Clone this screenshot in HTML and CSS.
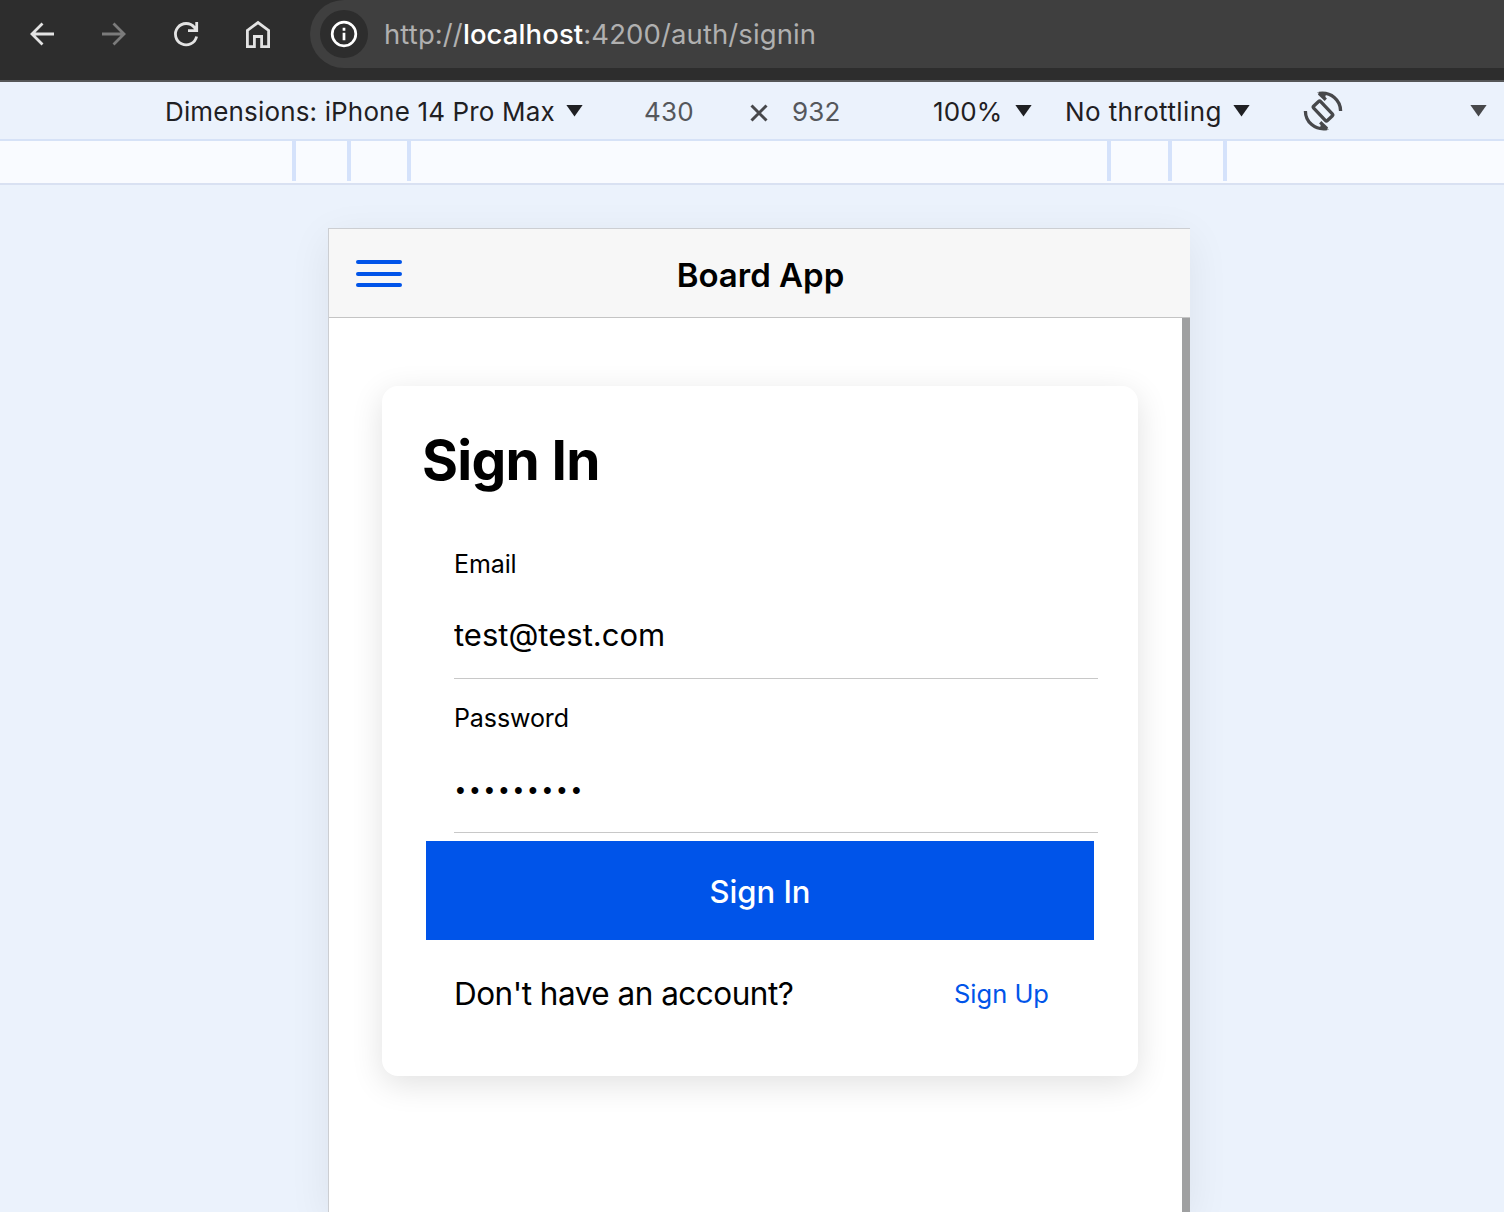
FILE: index.html
```html
<!DOCTYPE html>
<html lang="en">
<head>
    <meta charset="UTF-8">
    <meta name="viewport" content="width=device-width, initial-scale=1.0">
    <title>Board App</title>
    <link rel="stylesheet" href="styles.css">
</head>
<body>
    <div class="browser-bar">
        <svg class="nav-icon" viewBox="0 0 32 32"><path d="M28 16H6M16.5 5.5L6 16l10.5 10.5"/></svg>
        <svg class="nav-icon disabled" viewBox="0 0 32 32"><path d="M4 16h22M15.5 5.5L26 16 15.5 26.5"/></svg>
        <svg class="nav-icon" viewBox="0 0 32 32"><path d="M26.6 18.5A10.7 10.7 0 1 1 24.5 9.5L27 12.2M26.7 4v8.6H18"/></svg>
        <svg class="nav-icon" viewBox="0 0 32 32"><path d="M5.4 28.6V12.4L16 4.6l10.6 7.8v16.2h-7V18.5h-7.2v10.1z"/></svg>
        <div class="address">
            <div class="info">
                <svg viewBox="0 0 28 28"><circle cx="14" cy="14" r="11.8"/><path d="M14 12.8v7.4M14 7.8v3"/></svg>
            </div>
            <div class="url">http://<span>localhost</span>:4200/auth/signin</div>
        </div>
    </div>

    <div class="device-bar">
        <div class="select device">Dimensions: iPhone 14 Pro Max</div>
        <i class="arrow"></i>
        <div class="size width">430</div>
        <svg class="times" viewBox="0 0 18 18"><path d="M1.5 1.5l15 15M16.5 1.5l-15 15"/></svg>
        <div class="size height">932</div>
        <div class="select zoom">100%</div>
        <i class="arrow"></i>
        <div class="select throttling">No throttling</div>
        <i class="arrow"></i>
        <svg class="rotate" viewBox="0 0 40 40">
            <rect x="10" y="15.2" width="20" height="9.6" rx="1.5" transform="rotate(47 20 20)"/>
            <path d="M16 2.4C28 .6 37.6 9 37.6 20M16 2.4l6.8 6.4"/>
            <path d="M24 37.6C12 39.4 2.4 31 2.4 20M24 37.6l-6.8-6.4"/>
            <path class="tip" d="M14 1.5l9.5 0-1.5 5.5zM26 38.5l-9.5 0 1.5-5.5z"/>
        </svg>
        <i class="arrow more"></i>
    </div>

    <div class="ruler">
        <span class="r1"></span>
        <span class="r2"></span>
        <span class="r3"></span>
        <span class="r4"></span>
        <span class="r5"></span>
        <span class="r2"></span>
    </div>

    <div class="stage">
        <div class="phone">
            <div class="header">
                <div class="menu"><span></span><span></span><span></span></div>
                <div class="title">Board App</div>
            </div>
            <div class="content">
                <form class="card">
                    <h1>Sign In</h1>
                    <div class="item">
                        <label for="email">Email</label>
                        <input type="email" id="email" value="test@test.com">
                    </div>
                    <div class="item">
                        <label for="password">Password</label>
                        <input type="password" id="password" value="password1">
                    </div>
                    <button type="button">Sign In</button>
                    <div class="signup">
                        <span>Don't have an account?</span>
                        <a href="#">Sign Up</a>
                    </div>
                </form>
            </div>
        </div>
    </div>
</body>
</html>
```
FILE: styles.css
```css
* {
    box-sizing: border-box;
}
body {
    margin: 0;
    height: 1212px;
    display: flex;
    flex-direction: column;
    overflow: hidden;
    background: #ebf2fc;
    color: #000;
    font-family: Inter, "Liberation Sans", sans-serif;
}
svg {
    display: block;
    fill: none;
    stroke: currentColor;
}

/* browser toolbar */
.browser-bar {
    flex: none;
    display: flex;
    height: 82px;
    padding-left: 26px;
    background: #2d2d2d;
    border-bottom: 2px solid #555657;
    color: #e3e3e3;
}
.nav-icon {
    width: 32px;
    height: 32px;
    margin: 18px 40px 0 0;
    stroke-width: 2.8;
}
.nav-icon.disabled {
    color: #7b7b7b;
}
.address {
    flex: 1;
    display: flex;
    align-items: center;
    height: 68px;
    margin-left: -4px;
    padding-left: 10px;
    background: #3f3f3f;
    border-radius: 34px 0 0 34px;
}
.info {
    display: flex;
    align-items: center;
    justify-content: center;
    width: 48px;
    height: 48px;
    border-radius: 50%;
    background: #2d2d2d;
    color: #fff;
}
.info svg {
    width: 28px;
    height: 28px;
    stroke-width: 2.7;
}
.url {
    margin-left: 16px;
    font-size: 27.5px;
    letter-spacing: 0.1px;
    color: #b0b0b0;
}
.url span {
    font-weight: 500;
    color: #fff;
}

/* device toolbar */
.device-bar {
    flex: none;
    display: flex;
    align-items: center;
    height: 59px;
    padding-left: 165px;
    border-bottom: 2px solid #d6e2f7;
    font-size: 26px;
    line-height: 32px;
    letter-spacing: 0.15px;
    white-space: nowrap;
    color: #1f2023;
}
.arrow {
    width: 17px;
    height: 12px;
    background: currentColor;
    clip-path: polygon(0 0, 100% 0, 50% 100%);
}
.select, .size {
    padding-top: 2px;
}
.device {
    width: 401px;
}
.size {
    color: #55575b;
}
.width {
    width: 106px;
    margin-left: 61px;
}
.times {
    width: 18px;
    height: 18px;
    margin-top: 4px;
    stroke-width: 3;
    color: #47484b;
}
.height {
    width: 141px;
    margin-left: 24px;
}
.zoom {
    width: 82px;
}
.throttling {
    width: 168px;
    margin-left: 33px;
    letter-spacing: 0.4px;
}
.rotate {
    width: 40px;
    height: 40px;
    margin-left: 53px;
    stroke-width: 3.3;
    color: #47484b;
}
.rotate .tip {
    fill: currentColor;
    stroke: none;
}
.more {
    margin-left: 127px;
    color: #47484b;
}

.ruler {
    flex: none;
    display: flex;
    height: 44px;
    background: #f9fbff;
    border-bottom: 2px solid #d9e1f2;
}
.ruler span {
    height: 40px;
    border-right: 4px solid #d5e2fb;
}
.r1 {
    width: 296px;
}
.r2 {
    width: 55px;
}
.r3 {
    width: 60px;
}
.r4 {
    width: 700px;
}
.r5 {
    width: 61px;
}

/* emulated phone */
.stage {
    flex: 1;
    display: flex;
    padding: 43px 0 0 328px;
}
.phone {
    display: flex;
    flex-direction: column;
    width: 862px;
    background: #fff;
    border: 1px solid #ccced2;
    border-width: 1px 0 0 1px;
    box-shadow: 0 10px 40px rgba(0, 0, 0, 0.07);
}
.header {
    flex: none;
    display: flex;
    align-items: center;
    height: 89px;
    padding-left: 27px;
    background: #f7f7f7;
    border-bottom: 1px solid #c4c4c4;
}
.menu {
    display: flex;
    flex-direction: column;
    gap: 7.5px;
    width: 46px;
    margin-top: 1px;
}
.menu span {
    height: 4px;
    border-radius: 2px;
    background: #0054e9;
}
.title {
    flex: 1;
    margin: 3px 71px 0 0;
    text-align: center;
    font-size: 33px;
    font-weight: 600;
}
.content {
    flex: 1;
    padding: 68px 44px 0 53px;
    border-right: 8px solid #9fa0a1;
}

/* sign in form */
.card {
    height: 690px;
    padding: 39px 40px;
    border-radius: 16px;
    background: #fff;
    box-shadow: 0 8px 32px rgba(0, 0, 0, 0.12);
}
.card h1 {
    margin: 0 0 30px;
    font-size: 55px;
    line-height: 70px;
    font-weight: 700;
    letter-spacing: -0.7px;
}
.item {
    display: flex;
    flex-direction: column;
    gap: 35px;
    height: 154px;
    margin-left: 32px;
    padding-top: 24px;
    border-bottom: 1px solid #c8c8c8;
}
.item label {
    font-size: 25px;
    line-height: 30px;
    letter-spacing: -0.1px;
}
.item input {
    width: 100%;
    height: 40px;
    padding: 0;
    border: none;
    outline: none;
    background: none;
    font-family: inherit;
    font-size: 31px;
    color: #000;
}
.item input[type="password"] {
    padding: 4px 0 0 2px;
    font-family: "Liberation Sans", sans-serif;
    font-size: 25px;
    letter-spacing: 5.75px;
}
.card button {
    display: block;
    width: calc(100% - 8px);
    height: 99px;
    margin: 8px 4px;
    padding: 2px 0 0;
    border: none;
    background: #0054e9;
    color: #fff;
    font-family: inherit;
    font-size: 31px;
    font-weight: 500;
    cursor: pointer;
}
.signup {
    display: flex;
    align-items: center;
    justify-content: space-between;
    height: 90px;
    padding: 0 49px 0 32px;
    font-size: 31.5px;
    letter-spacing: -0.5px;
}
.signup a {
    font-size: 25.5px;
    letter-spacing: 0;
    color: #0054e9;
    text-decoration: none;
}
```
